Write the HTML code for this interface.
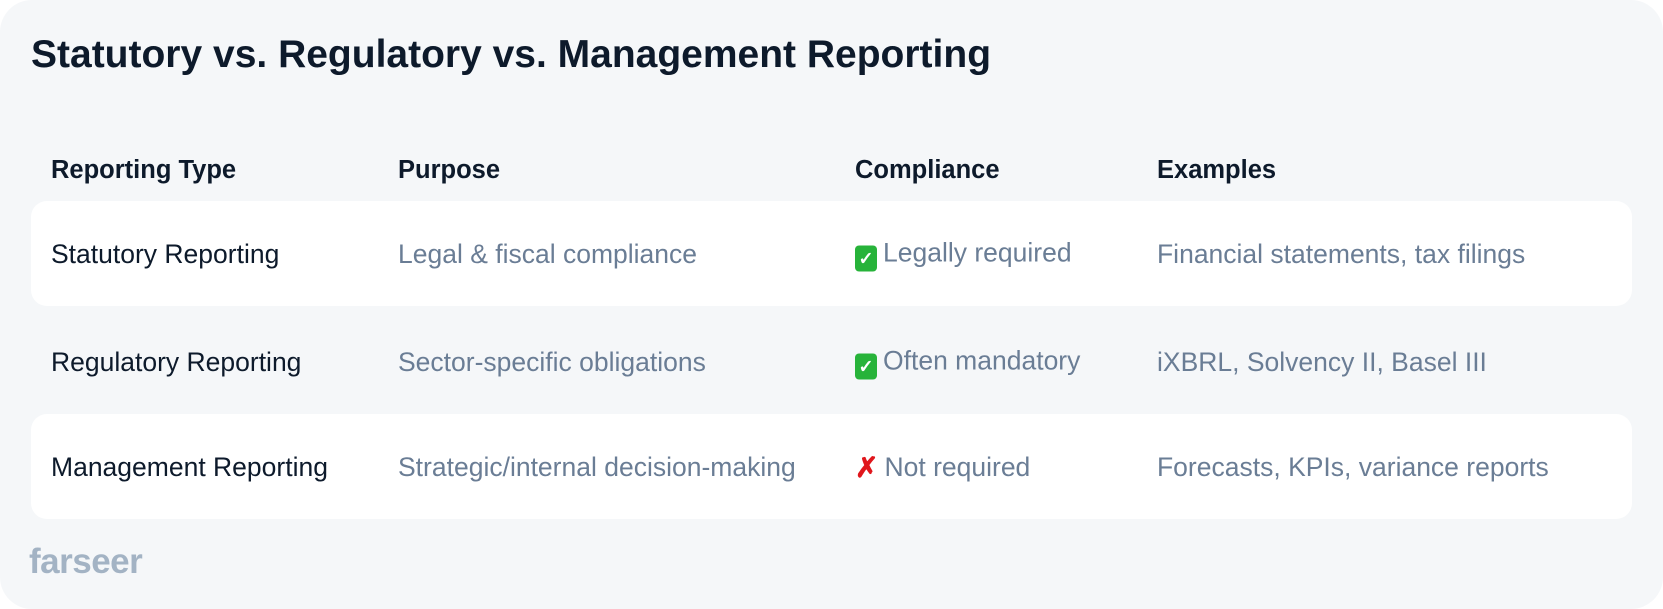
<!DOCTYPE html>
<html><head><meta charset="utf-8"><style>
html,body{margin:0;padding:0;width:1663px;height:609px;background:#fff;overflow:hidden}
.card{position:absolute;left:0;top:0;width:1663px;height:609px;background:#f5f7f9;border-radius:32px;font-family:"Liberation Sans",sans-serif}
h1{position:absolute;left:31px;top:33px;margin:0;font-size:39px;font-weight:700;color:#0d1a2b;letter-spacing:0px}
.row{position:absolute;left:31px;width:1601px;height:105px;border-radius:16px}
.row.w{background:#fff}
.c{position:absolute;top:50%;transform:translateY(-50%);font-size:26.5px;line-height:32px;color:#6a7d95;white-space:nowrap}
.c1{left:20px;color:#0d1a2b}.c2{left:367px}.c3{left:824px}.c4{left:1126px}
.hd .c{font-weight:700;color:#0d1a2b;font-size:25.5px}
.ck{display:inline-block;width:22px;height:26px;background:#27b33a;border-radius:4px;color:#fff;font-size:18px;text-align:center;line-height:26px;vertical-align:-3px;margin-right:6px;font-weight:700}
.x{display:inline-block;color:#e0161c;font-weight:700;margin-right:6px;font-size:28px;line-height:26px;vertical-align:-1px}
.logo{position:absolute;left:29px;top:542px;font-size:35px;font-weight:700;color:#a3b3c4;letter-spacing:-0.5px}
</style></head><body><div class="card">
<h1>Statutory vs. Regulatory vs. Management Reporting</h1>
<div class="row hd" style="top:120px;height:100px"><div class="c c1">Reporting Type</div><div class="c c2">Purpose</div><div class="c c3">Compliance</div><div class="c c4">Examples</div></div>
<div class="row w" style="top:201px"><div class="c c1">Statutory Reporting</div><div class="c c2">Legal &amp; fiscal compliance</div><div class="c c3"><span class="ck">✓</span>Legally required</div><div class="c c4">Financial statements, tax filings</div></div>
<div class="row" style="top:309px"><div class="c c1">Regulatory Reporting</div><div class="c c2">Sector-specific obligations</div><div class="c c3"><span class="ck">✓</span>Often mandatory</div><div class="c c4">iXBRL, Solvency II, Basel III</div></div>
<div class="row w" style="top:414px"><div class="c c1">Management Reporting</div><div class="c c2">Strategic/internal decision-making</div><div class="c c3"><span class="x">✗</span>Not required</div><div class="c c4">Forecasts, KPIs, variance reports</div></div>
<div class="logo">farseer</div>
</div></body></html>
